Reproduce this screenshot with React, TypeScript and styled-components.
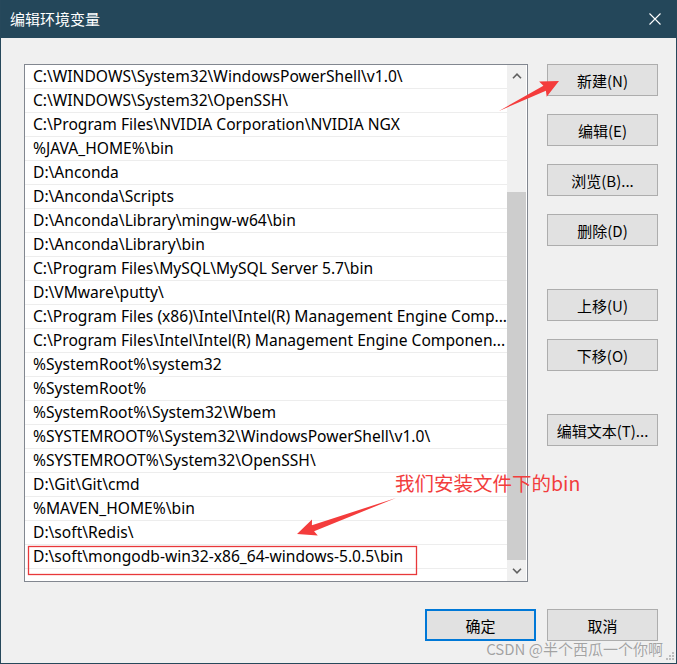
import React from "react";
import styled, { createGlobalStyle } from "styled-components";

const Global = createGlobalStyle`
  html, body { margin: 0; padding: 0; background: #f0f0f0; }
  * { box-sizing: border-box; }
`;

const UI_FONT = `"Noto Sans", "Noto Sans CJK SC", sans-serif`;
const CJK_FONT = `"Noto Sans CJK SC", "Noto Sans", sans-serif`;

const Window = styled.div`
  position: relative;
  width: 677px;
  height: 664px;
  border: 1px solid #26485b;
  border-top: none;
  background: #f0f0f0;
  display: flex;
  flex-direction: column;
  font-family: ${UI_FONT};
  overflow: hidden;
`;

const TitleBar = styled.div`
  height: 38px;
  flex: 0 0 38px;
  background: #24475a;
  display: flex;
  align-items: center;
  justify-content: space-between;
  padding: 0 15px 0 9px;
`;

const Title = styled.span`
  color: #ffffff;
  font-family: ${CJK_FONT};
  font-size: 15px;
  line-height: 20px;
`;

const CloseIcon = styled.svg`
  width: 12px;
  height: 12px;
  display: block;
`;

const Main = styled.div`
  display: flex;
  align-items: flex-start;
  padding: 26px 0 0 23px;
`;

const ListBox = styled.div`
  position: relative;
  width: 504px;
  height: 518px;
  border: 1px solid #828790;
  background: #ffffff;
  display: flex;
`;

const Items = styled.div`
  flex: 1;
  overflow: hidden;
  display: flex;
  flex-direction: column;
`;

const Row = styled.div`
  flex: 0 0 24px;
  height: 24px;
  padding-left: 8px;
  border-bottom: 1px solid #ededed;
  font-size: 15.6px;
  line-height: 23px;
  color: #000000;
  white-space: nowrap;
  overflow: hidden;
`;

const Scrollbar = styled.div`
  width: 19px;
  margin-right: 1px;
  background: #f0f0f0;
  display: flex;
  flex-direction: column;
`;

const ScrollArrow = styled.div`
  flex: 0 0 21px;
  display: flex;
  align-items: center;
  justify-content: center;
`;

const Track = styled.div`
  flex: 1;
  display: flex;
  flex-direction: column;
  padding-top: 106px;
`;

const Thumb = styled.div`
  flex: 1;
  background: #cdcdcd;
`;

const ButtonColumn = styled.div`
  margin-left: 19px;
  display: flex;
  flex-direction: column;
`;

const Button = styled.button<{ $gap?: number; $primary?: boolean }>`
  width: 111px;
  height: 32px;
  margin-top: ${(p) => p.$gap ?? 0}px;
  background: #e1e1e1;
  border: ${(p) => (p.$primary ? "2px solid #0078d7" : "1px solid #adadad")};
  font-family: ${CJK_FONT};
  font-size: 15px;
  color: #000000;
  padding: 0;
  display: flex;
  align-items: center;
  justify-content: center;
`;

const Footer = styled.div`
  display: flex;
  justify-content: flex-end;
  gap: 11px;
  margin-top: 27px;
  padding-right: 18px;
`;

const Overlay = styled.svg`
  position: absolute;
  left: -1px;
  top: 0;
  width: 677px;
  height: 664px;
  pointer-events: none;
`;

const Note = styled.span`
  position: absolute;
  left: 394px;
  top: 470px;
  font-family: ${CJK_FONT};
  font-size: 19.5px;
  line-height: 26px;
  color: #f23d3d;
  white-space: nowrap;
`;

const Watermark = styled.span`
  position: absolute;
  right: 13px;
  bottom: 4px;
  font-family: ${CJK_FONT};
  font-size: 15px;
  line-height: 20px;
  color: #a3a3a3;
  text-shadow: 0 0 1px #ffffff;
  white-space: nowrap;
`;

const Grip = styled.svg`
  position: absolute;
  right: 1px;
  bottom: 2px;
  width: 10px;
  height: 10px;
`;

const paths = [
  "C:\\WINDOWS\\System32\\WindowsPowerShell\\v1.0\\",
  "C:\\WINDOWS\\System32\\OpenSSH\\",
  "C:\\Program Files\\NVIDIA Corporation\\NVIDIA NGX",
  "%JAVA_HOME%\\bin",
  "D:\\Anconda",
  "D:\\Anconda\\Scripts",
  "D:\\Anconda\\Library\\mingw-w64\\bin",
  "D:\\Anconda\\Library\\bin",
  "C:\\Program Files\\MySQL\\MySQL Server 5.7\\bin",
  "D:\\VMware\\putty\\",
  "C:\\Program Files (x86)\\Intel\\Intel(R) Management Engine Comp...",
  "C:\\Program Files\\Intel\\Intel(R) Management Engine Componen...",
  "%SystemRoot%\\system32",
  "%SystemRoot%",
  "%SystemRoot%\\System32\\Wbem",
  "%SYSTEMROOT%\\System32\\WindowsPowerShell\\v1.0\\",
  "%SYSTEMROOT%\\System32\\OpenSSH\\",
  "D:\\Git\\Git\\cmd",
  "%MAVEN_HOME%\\bin",
  "D:\\soft\\Redis\\",
  "D:\\soft\\mongodb-win32-x86_64-windows-5.0.5\\bin",
  "",
];

const sideButtons: { label: string; gap: number }[] = [
  { label: "新建(N)", gap: 0 },
  { label: "编辑(E)", gap: 18 },
  { label: "浏览(B)...", gap: 18 },
  { label: "删除(D)", gap: 18 },
  { label: "上移(U)", gap: 43 },
  { label: "下移(O)", gap: 18 },
  { label: "编辑文本(T)...", gap: 43 },
];

function arrow(tx: number, ty: number, px: number, py: number, head: number, barb: number, shaft: number) {
  const dx = px - tx;
  const dy = py - ty;
  const len = Math.hypot(dx, dy);
  const ux = dx / len;
  const uy = dy / len;
  const nx = -uy;
  const ny = ux;
  const bx = px - ux * head;
  const by = py - uy * head;
  const pts = [
    [tx, ty],
    [bx + nx * shaft, by + ny * shaft],
    [bx - ux * 2 + nx * barb, by - uy * 2 + ny * barb],
    [px, py],
    [bx - ux * 2 - nx * barb, by - uy * 2 - ny * barb],
    [bx - nx * shaft, by - ny * shaft],
  ];
  return pts.map((p) => `${p[0].toFixed(1)},${p[1].toFixed(1)}`).join(" ");
}

export default function App() {
  return (
    <>
      <Global />
      <Window>
        <TitleBar>
          <Title>编辑环境变量</Title>
          <CloseIcon viewBox="0 0 12 12">
            <path d="M0.5 0.5 L11.5 11.5 M11.5 0.5 L0.5 11.5" stroke="#ffffff" strokeWidth="1.1" fill="none" />
          </CloseIcon>
        </TitleBar>
        <Main>
          <ListBox>
            <Items>
              {paths.map((p, i) => (
                <Row key={i}>{p}</Row>
              ))}
            </Items>
            <Scrollbar>
              <ScrollArrow>
                <svg width="10" height="6" viewBox="0 0 10 6">
                  <path d="M1 5.2 L5 1.2 L9 5.2" stroke="#606060" strokeWidth="1.6" fill="none" />
                </svg>
              </ScrollArrow>
              <Track>
                <Thumb />
              </Track>
              <ScrollArrow>
                <svg width="10" height="6" viewBox="0 0 10 6">
                  <path d="M1 0.8 L5 4.8 L9 0.8" stroke="#606060" strokeWidth="1.6" fill="none" />
                </svg>
              </ScrollArrow>
            </Scrollbar>
          </ListBox>
          <ButtonColumn>
            {sideButtons.map((b) => (
              <Button key={b.label} $gap={b.gap}>
                {b.label}
              </Button>
            ))}
          </ButtonColumn>
        </Main>
        <Footer>
          <Button $primary>确定</Button>
          <Button>取消</Button>
        </Footer>

        <Overlay viewBox="0 0 677 664">
          <polygon points={arrow(499, 111, 559, 81, 16, 8.5, 2.8)} fill="#f43c3c" />
          <polygon points={arrow(396, 498, 297, 534, 17, 8.5, 3.2)} fill="#f43c3c" />
          <rect x="28.5" y="546.5" width="388" height="28" fill="none" stroke="#e8383a" strokeWidth="1.3" />
        </Overlay>
        <Note>我们安装文件下的bin</Note>
        <Watermark>CSDN @半个西瓜一个你啊</Watermark>
        <Grip viewBox="0 0 10 10">
          <rect x="7" y="1" width="2" height="2" fill="#bdbdbd" />
          <rect x="4" y="4" width="2" height="2" fill="#bdbdbd" />
          <rect x="7" y="4" width="2" height="2" fill="#bdbdbd" />
          <rect x="1" y="7" width="2" height="2" fill="#bdbdbd" />
          <rect x="4" y="7" width="2" height="2" fill="#bdbdbd" />
          <rect x="7" y="7" width="2" height="2" fill="#bdbdbd" />
        </Grip>
      </Window>
    </>
  );
}
